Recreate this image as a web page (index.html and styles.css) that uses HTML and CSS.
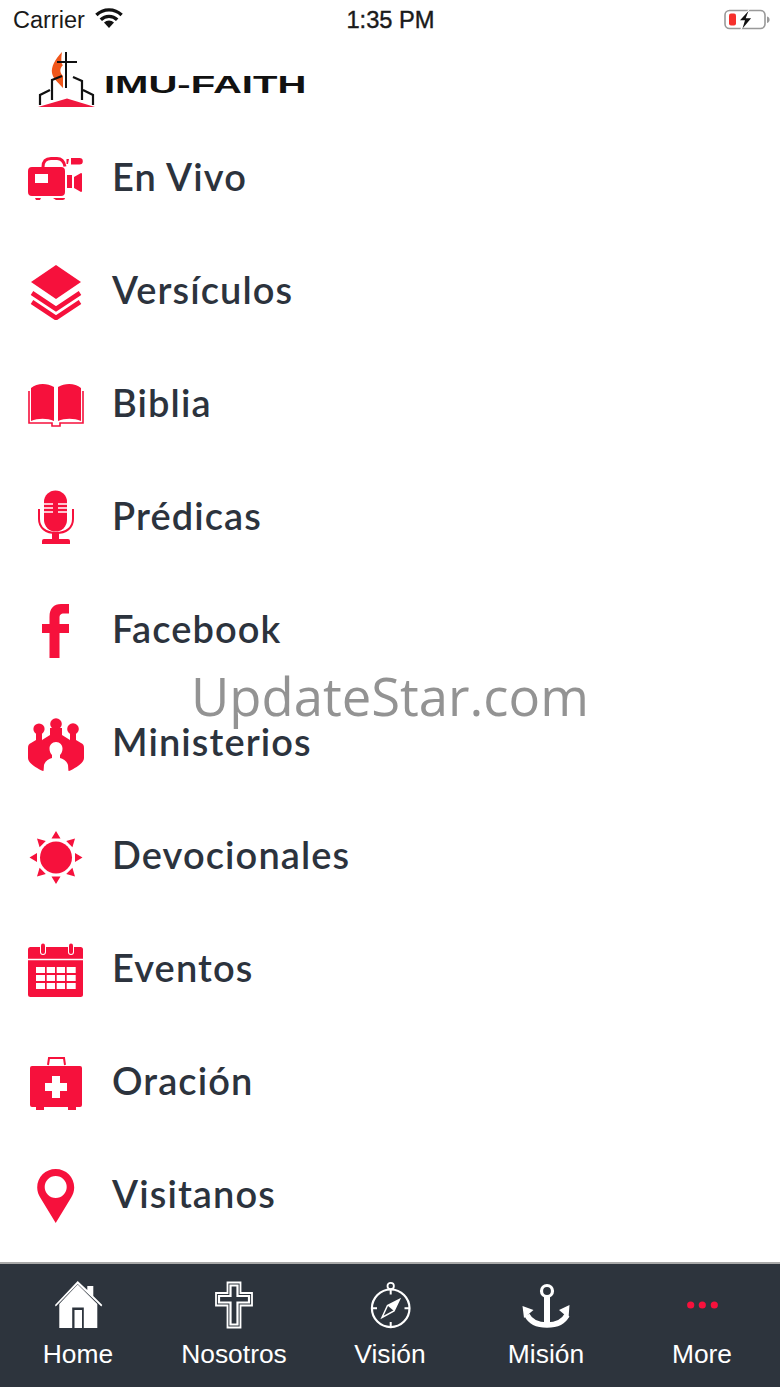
FILE: index.html
```html
<!DOCTYPE html>
<html lang="en">
<head>
    <meta charset="UTF-8">
    <meta name="viewport" content="width=device-width, initial-scale=1.0">
    <title>IMU-Faith</title>
    <link rel="stylesheet" href="styles.css">
</head>
<body>
<div class="page">
    <!-- Status bar -->
    <div class="status-bar">
        <div class="status-left">
            <span>Carrier</span>
            <svg class="wifi" width="30" height="22" viewBox="0 0 30 22">
                <path d="M15 21l-5-5.400a7.200 7.200 0 0 1 10 0z" fill="#111"/>
                <path d="M6.800 12.800a11.600 11.600 0 0 1 16.400 0" fill="none" stroke="#111" stroke-width="3.400"/>
                <path d="M2.400 8a18 18 0 0 1 25.200 0" fill="none" stroke="#111" stroke-width="3.400"/>
            </svg>
        </div>
        <span class="status-time">1:35 PM</span>
        <svg class="battery" width="46" height="22" viewBox="0 0 46 22">
            <rect x="1" y="1.500" width="40" height="18" rx="4.500" fill="none" stroke="#999" stroke-width="1.600"/>
            <rect x="5" y="4.500" width="7" height="12" rx="2" fill="#f6302c"/>
            <path d="M43 7.500c2 .6 2.600 2 2.600 3.200s-.6 2.700-2.600 3.300z" fill="#999"/>
            <path d="M26 -1L14 12h5l-3 10 12-14h-6z" fill="#fff"/>
            <path d="M24.500 2l-8.500 9.200h5l-2.500 8.400 8.600-10.400h-5.400z" fill="#111"/>
        </svg>
    </div>

    <!-- Logo -->
    <div class="logo-row">
        <svg class="logo-mark" width="60" height="58" viewBox="0 0 60 58">
            <path d="M25 1C18 8 14 16 15 22c1 6 6 9 11 15V25c-3-3-4-7 0-11-2-1-2-7-1-13z" fill="#f0561a"/>
            <path d="M29 1v36M20 11h20" fill="none" stroke="#111" stroke-width="2"/>
            <path d="M15 49V29l10-4M45 49V30l-9-4M3 54V44l10-5M56 54V44l-10-5" fill="none" stroke="#111" stroke-width="2.200"/>
            <path d="M1 56l29-8.500L58 56z" fill="#f0183f"/>
        </svg>
        <div class="logo-text"><span>IMU-FAITH</span></div>
    </div>

    <!-- Menu list -->
    <ul class="menu">
        <li class="menu-item">
            <svg class="menu-icon" viewBox="0 0 56 56">
                <path d="M4 16h29a4 4 0 0 1 4 4v21a4 4 0 0 1-4 4H4a4 4 0 0 1-4-4V20a4 4 0 0 1 4-4zM7 23v9h13v-9z" fill-rule="evenodd"/>
                <path d="M15 16c0-6 3-8.500 8-8.500h6c5 0 7 3 8 8" fill="none" stroke="#f6113c" stroke-width="3"/>
                <path d="M43 7h8.500a3.300 3.300 0 0 1 0 6.600H43zM38.500 8h2.500l-1 5h-1.500zM39 24h5v13h-5zM46 26l7-4a1 1 0 0 1 1 1v17a1 1 0 0 1-1 1l-7-4zM7 47h6l-1 2H8zM25 47h12c0 2-2 2-4 2h-5z"/>
            </svg>
            <span class="menu-label">En Vivo</span>
        </li>
        <li class="menu-item">
            <svg class="menu-icon" viewBox="0 0 56 56">
                <path d="M28 1l25 17-25 17L3 18z"/>
                <path d="M4 29l24 16 24-16M4 38l24 16 24-16" fill="none" stroke="#f6113c" stroke-width="4.600"/>
            </svg>
            <span class="menu-label">Versículos</span>
        </li>
        <li class="menu-item">
            <svg class="menu-icon" viewBox="0 0 56 56">
                <path d="M3 11c6-5 16-5 23-1v34c-7-3-16-3-23 0zM30 10c7-4 17-4 23 1v33c-7-3-16-3-23 0z"/>
                <path d="M1 14v32h23v3h8v-3h23V14" fill="none" stroke="#f6113c" stroke-width="1.600"/>
            </svg>
            <span class="menu-label">Biblia</span>
        </li>
        <li class="menu-item">
            <svg class="menu-icon" viewBox="0 0 56 56">
                <path d="M16 12a11.500 11.500 0 0 1 23 0v18a11.500 11.500 0 0 1-23 0z"/>
                <path d="M16 14h9M30 14h9M16 18h9M30 18h9M16 22h9M30 22h9" stroke="#fff" stroke-width="1.500"/>
                <path d="M11 19v10c0 9 7 14 17 14s17-5 17-14V19" fill="none" stroke="#f6113c" stroke-width="2"/>
                <path d="M24 42h7v8h-7z"/>
                <path d="M14 54v-3a2 2 0 0 1 2-2h24a2 2 0 0 1 2 2v3z"/>
            </svg>
            <span class="menu-label">Prédicas</span>
        </li>
        <li class="menu-item">
            <svg class="menu-icon" viewBox="0 0 56 56">
                <path d="M21.500 55V30H14v-9h7.500v-7C21.500 5 26 1 33 1h8v9.500h-5c-3.500 0-4.500 1.500-4.500 4.500v6H41v9h-9.500v25z"/>
            </svg>
            <span class="menu-label">Facebook</span>
        </li>
        <li class="menu-item">
            <svg class="menu-icon" viewBox="0 0 56 56">
                <circle cx="11" cy="13" r="5.600"/>
                <circle cx="28" cy="8" r="5.800"/>
                <circle cx="45" cy="13" r="5.800"/>
                <path d="M22 12h12v7l8 5-3 9H17l-3-9 8-5z"/>
                <path d="M8 16h6v8l7 3c2 1 3 3 3 5v20l-9 3C8 52 0 47 0 42V32c0-3 1-4 3-5l5-3z"/>
                <path d="M48 16h-6v8l-7 3c-2 1-3 3-3 5v20l9 3c7-3 15-8 15-13V32c0-3-1-4-3-5l-5-3z"/>
                <path d="M28 26c-4 0-6.500 3-6.500 6.500 0 3 1 5 2.500 6.500v3c-3 1-7 3-8 7l-.5 7h25l-.5-7c-1-4-5-6-8-7v-3c1.500-1.500 2.500-3.500 2.500-6.500C34.500 29 32 26 28 26z" fill="#fff"/>
            </svg>
            <span class="menu-label">Ministerios</span>
        </li>
        <li class="menu-item">
            <svg class="menu-icon" viewBox="0 0 56 56">
                <circle cx="28" cy="28.500" r="16"/>
                <path d="M28 2l4.500 7.500h-9zM28 55l4.500-7.500h-9zM1.500 28.500L9 24v9zM54.500 28.500L47 24v9zM9 9.500l8.800 2.500-6.200 6.200zM47 9.500l-2.600 8.700-6.200-6.200zM9 47.500l2.600-8.700 6.200 6.200zM47 47.500l-8.800-2.500 6.200-6.200z"/>
            </svg>
            <span class="menu-label">Devocionales</span>
        </li>
        <li class="menu-item">
            <svg class="menu-icon" viewBox="0 0 56 56">
                <rect x="0" y="5" width="55" height="50" rx="2.500"/>
                <path d="M0 17.500h55" stroke="#fff" stroke-width="1.500"/>
                <rect x="12" y="0.500" width="6" height="12.500" rx="3" fill="#fff"/>
                <rect x="13" y="1.500" width="4" height="10.500" rx="2"/>
                <rect x="40" y="0.500" width="6" height="12.500" rx="3" fill="#fff"/>
                <rect x="41" y="1.500" width="4" height="10.500" rx="2"/>
                <path d="M8 25h9v6H8zM18.700 25H27v6h-8.300zM28.700 25H37v6h-8.300zM38.700 25h9v6h-9zM8 33h9v6H8zM18.700 33H27v6h-8.300zM28.700 33H37v6h-8.300zM38.700 33h9v6h-9zM8 41h9v6H8zM18.700 41H27v6h-8.300zM28.700 41H37v6h-8.300zM38.700 41h9v6h-9z" fill="#fff"/>
            </svg>
            <span class="menu-label">Eventos</span>
        </li>
        <li class="menu-item">
            <svg class="menu-icon" viewBox="0 0 56 56">
                <path d="M20 10l1-7h15l1 7" fill="none" stroke="#f6113c" stroke-width="2"/>
                <path d="M4 11h48a2 2 0 0 1 2 2v37a2 2 0 0 1-2 2h-4v3h-8v-3H16v3H8v-3H4a2 2 0 0 1-2-2V13a2 2 0 0 1 2-2z"/>
                <path d="M24 21h8v7h7v8h-7v7h-8v-7h-7v-8h7z" fill="#fff"/>
            </svg>
            <span class="menu-label">Oración</span>
        </li>
        <li class="menu-item">
            <svg class="menu-icon" viewBox="0 0 56 56">
                <path d="M27.700 1C17.500 1 9.200 9 9.200 19.500c0 4 1.300 7 3 10L27.700 55l15.500-25.500c1.700-3 3-6 3-10C46.200 9 37.900 1 27.700 1zm0 7a11 11 0 1 1 0 22 11 11 0 0 1 0-22z" fill-rule="evenodd"/>
            </svg>
            <span class="menu-label">Visitanos</span>
        </li>
    </ul>

    <!-- Bottom tabs -->
    <nav class="tab-bar">
        <div class="tab">
            <svg class="tab-icon" viewBox="0 0 50 50">
                <path d="M24.700 1L34.300 10V6h6v10l9 9-1 1.500L24.700 4 2.700 26.500 2 25z" fill="#fff"/>
                <path d="M24.700 4.500L44.300 24v24H30.800V27.500H19.200V48H6.300V24z" fill="#fff"/>
                <path d="M21.500 30h7.500v18h-7.500z" fill="#fff"/>
            </svg>
            <span class="tab-label">Home</span>
        </div>
        <div class="tab">
            <svg class="tab-icon" viewBox="0 0 50 50">
                <path d="M18.500 2.500h13v10.500h11.500v12.500H31.500V47.500h-13V25.500H7V13h11.500z" fill="none" stroke="#fff" stroke-width="1.800"/>
                <path d="M21.500 5.500h7v10.500h11.500v6.500H28.500V44.500h-7V22.500H10V16h11.500z" fill="none" stroke="#fff" stroke-width="2.200"/>
            </svg>
            <span class="tab-label">Nosotros</span>
        </div>
        <div class="tab">
            <svg class="tab-icon" viewBox="0 0 50 50">
                <circle cx="25.700" cy="28.300" r="18.800" fill="none" stroke="#fff" stroke-width="2.200"/>
                <circle cx="25.700" cy="6" r="3.200" fill="none" stroke="#fff" stroke-width="1.800"/>
                <path d="M25.700 9.500v5M25.700 42v5M7 28.300h5M39.500 28.300h5" stroke="#fff" stroke-width="2"/>
                <path d="M34.500 19.500L29 31 17 37.500l5.500-12z" fill="none" stroke="#fff" stroke-width="1.500"/>
                <path d="M34.500 19.500L29 31l-6.500-5.500z" fill="#fff"/>
            </svg>
            <span class="tab-label">Visión</span>
        </div>
        <div class="tab">
            <svg class="tab-icon" viewBox="0 0 50 50">
                <circle cx="26" cy="11" r="5.500" fill="none" stroke="#fff" stroke-width="3.200"/>
                <path d="M26 16v28" stroke="#fff" stroke-width="6"/>
                <path d="M6 35c3 6 10 10 20 10s17-4 20-10" fill="none" stroke="#fff" stroke-width="5.500"/>
                <path d="M1.500 26l11 4-9.500 8zM48.500 25l-10.500 5 9.500 8z" fill="#fff"/>
            </svg>
            <span class="tab-label">Misión</span>
        </div>
        <div class="tab">
            <svg class="tab-icon" viewBox="0 0 50 50">
                <circle cx="13.700" cy="25" r="3.600" fill="#f6113c"/>
                <circle cx="25.300" cy="25" r="3.600" fill="#f6113c"/>
                <circle cx="37.300" cy="25" r="3.600" fill="#f6113c"/>
            </svg>
            <span class="tab-label">More</span>
        </div>
    </nav>

    <!-- Site stamp over the page -->
    <div class="stamp">UpdateStar.com</div>
</div>
</body>
</html>
```

FILE: styles.css
```css
body {
    margin: 0;
    background-color: #fff;
}
.page {
    position: relative;
    width: 780px;
    height: 1387px;
    overflow: hidden;
    display: flex;
    flex-direction: column;
    background-color: #fff;
}
.status-bar {
    height: 40px;
    flex: none;
    display: flex;
    align-items: center;
    justify-content: space-between;
    padding: 0 10px 0 13px;
    font-family: "Liberation Sans", sans-serif;
    font-size: 23.5px;
    color: #1a1a1a;
}
.status-left {
    width: 200px;
    display: flex;
    align-items: center;
    gap: 9px;
}
.wifi {
    margin-top: -4px;
}
.status-time {
    font-size: 23.7px;
    margin-left: -2px;
    -webkit-text-stroke: 0.4px #1a1a1a;
}
.battery {
    margin-left: 154px;
}
.logo-row {
    height: 82px;
    flex: none;
    display: flex;
    align-items: flex-start;
    padding: 11px 0 0 37px;
    box-sizing: border-box;
}
.logo-text {
    margin: 22px 0 0 7px;
    font-family: "Liberation Sans", sans-serif;
    font-weight: bold;
    font-size: 23px;
    line-height: 25px;
    color: #111;
    white-space: nowrap;
}
.logo-text span {
    display: inline-block;
    transform: scaleX(1.74);
    transform-origin: left center;
}
.menu {
    list-style: none;
    margin: 0;
    padding: 0;
    flex: 1;
}
.menu-item {
    height: 113px;
    display: flex;
    align-items: center;
    padding-left: 28px;
}
.menu-icon {
    width: 56px;
    height: 56px;
    flex: none;
    fill: #f6113c;
    margin-right: 28px;
}
.menu-label {
    padding-bottom: 5px;
    font-family: "Lato", sans-serif;
    font-weight: 600;
    font-size: 38px;
    letter-spacing: 1.1px;
    color: #2c333d;
}
.tab-bar {
    height: 125px;
    flex: none;
    box-sizing: border-box;
    border-top: 2px solid #a9a9a9;
    background-color: #2d343d;
    display: flex;
    padding-top: 16px;
}
.tab {
    width: 156px;
    display: flex;
    flex-direction: column;
    align-items: center;
}
.tab-icon {
    width: 50px;
    height: 50px;
}
.tab-label {
    margin-top: 8px;
    font-family: "Liberation Sans", sans-serif;
    font-size: 26.4px;
    line-height: 32px;
    color: #fff;
}
.stamp {
    position: absolute;
    left: 191px;
    top: 661px;
    font-family: "Open Sans", sans-serif;
    font-weight: 400;
    font-size: 52.6px;
    line-height: 70px;
    color: #939393;
}
```
